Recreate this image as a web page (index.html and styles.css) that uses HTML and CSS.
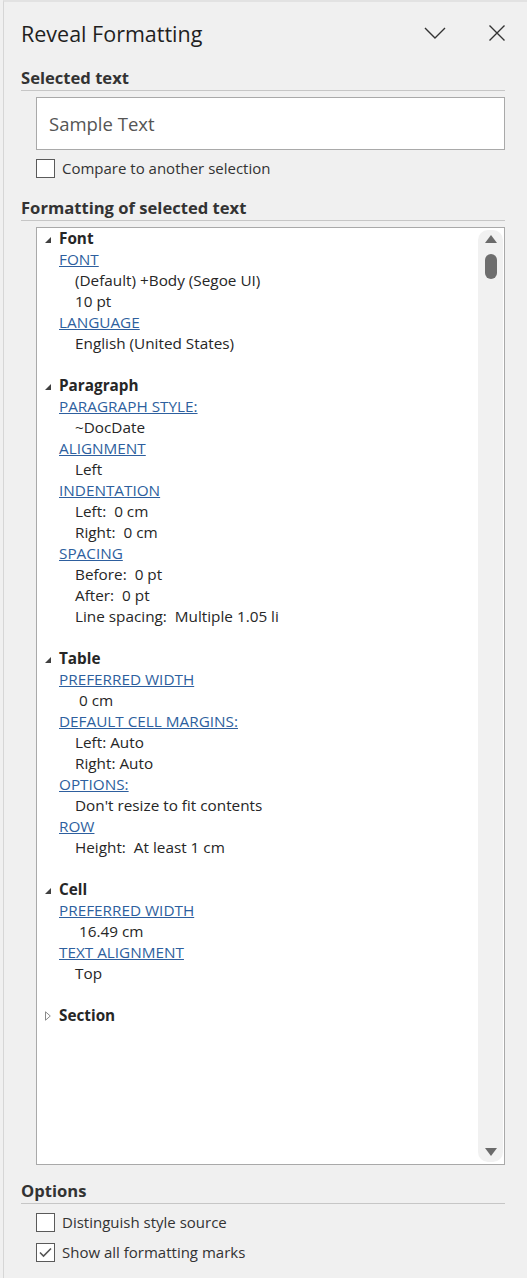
FILE: index.html
```html
<!DOCTYPE html>
<html lang="en">
<head>
    <meta charset="UTF-8">
    <title>Reveal Formatting</title>
    <link rel="stylesheet" href="styles.css">
</head>
<body>
    <div class="pane">
        <div class="pane-header">
            <h1>Reveal Formatting</h1>
            <div class="header-icons">
                <svg class="icon" width="22" height="14" viewBox="0 0 22 14"><path d="M1 2 L11 12 L21 2" fill="none" stroke="#333" stroke-width="1.4"/></svg>
                <svg class="icon" width="18" height="18" viewBox="0 0 18 18"><path d="M1.5 1.5 L16.5 16.5 M16.5 1.5 L1.5 16.5" fill="none" stroke="#333" stroke-width="1.4"/></svg>
            </div>
        </div>

        <h2 class="section-title">Selected text</h2>
        <div class="sample-box">Sample Text</div>
        <label class="check-row">
            <span class="checkbox"></span>
            Compare to another selection
        </label>

        <h2 class="section-title">Formatting of selected text</h2>
        <div class="list-box">
            <div class="tree">
                <div class="grp"><svg class="tri" width="6" height="6" viewBox="0 0 6 6"><path d="M6 0 L6 6 L0 6 Z" fill="#404040"/></svg>Font</div>
                <div class="key"><a href="#">FONT</a></div>
                <div class="val">(Default) +Body (Segoe UI)</div>
                <div class="val">10 pt</div>
                <div class="key"><a href="#">LANGUAGE</a></div>
                <div class="val">English (United States)</div>
                <div class="gap"></div>

                <div class="grp"><svg class="tri" width="6" height="6" viewBox="0 0 6 6"><path d="M6 0 L6 6 L0 6 Z" fill="#404040"/></svg>Paragraph</div>
                <div class="key"><a href="#">PARAGRAPH STYLE:</a></div>
                <div class="val">~DocDate</div>
                <div class="key"><a href="#">ALIGNMENT</a></div>
                <div class="val">Left</div>
                <div class="key"><a href="#">INDENTATION</a></div>
                <div class="val">Left:&nbsp; 0 cm</div>
                <div class="val">Right:&nbsp; 0 cm</div>
                <div class="key"><a href="#">SPACING</a></div>
                <div class="val">Before:&nbsp; 0 pt</div>
                <div class="val">After:&nbsp; 0 pt</div>
                <div class="val">Line spacing:&nbsp; Multiple 1.05 li</div>
                <div class="gap"></div>

                <div class="grp"><svg class="tri" width="6" height="6" viewBox="0 0 6 6"><path d="M6 0 L6 6 L0 6 Z" fill="#404040"/></svg>Table</div>
                <div class="key"><a href="#">PREFERRED WIDTH</a></div>
                <div class="val deep">0 cm</div>
                <div class="key"><a href="#">DEFAULT CELL MARGINS:</a></div>
                <div class="val">Left: Auto</div>
                <div class="val">Right: Auto</div>
                <div class="key"><a href="#">OPTIONS:</a></div>
                <div class="val">Don't resize to fit contents</div>
                <div class="key"><a href="#">ROW</a></div>
                <div class="val">Height:&nbsp; At least 1 cm</div>
                <div class="gap"></div>

                <div class="grp"><svg class="tri" width="6" height="6" viewBox="0 0 6 6"><path d="M6 0 L6 6 L0 6 Z" fill="#404040"/></svg>Cell</div>
                <div class="key"><a href="#">PREFERRED WIDTH</a></div>
                <div class="val deep">16.49 cm</div>
                <div class="key"><a href="#">TEXT ALIGNMENT</a></div>
                <div class="val">Top</div>
                <div class="gap"></div>

                <div class="grp"><svg class="tri closed" width="6" height="10" viewBox="0 0 6 10"><path d="M0.5 0.8 L5.3 5 L0.5 9.2 Z" fill="none" stroke="#8a8a8a" stroke-width="1"/></svg>Section</div>
            </div>
            <div class="scrollbar">
                <span class="arrow-up"></span>
                <span class="thumb"></span>
                <span class="track"></span>
                <span class="arrow-down"></span>
            </div>
        </div>

        <h2 class="section-title options">Options</h2>
        <label class="check-row">
            <span class="checkbox"></span>
            Distinguish style source
        </label>
        <label class="check-row">
            <span class="checkbox checked">
                <svg width="13" height="11" viewBox="0 0 13 11"><path d="M1 5.5 L4.5 9 L12 1.5" fill="none" stroke="#555" stroke-width="1.6"/></svg>
            </span>
            Show all formatting marks
        </label>
    </div>
</body>
</html>
```

FILE: styles.css
```css
body {
    margin: 0;
    background-color: #f0f0f0;
    font-family: "Segoe UI", "Open Sans", "Noto Sans", sans-serif;
    color: #262626;
}
.pane {
    margin-left: 3px;
    min-height: 1276px;
    border-left: 1px solid #d6d6d6;
    border-top: 2px solid #e2e2e2;
    padding: 0 22px 0 17px;
}
.pane-header {
    display: flex;
    align-items: center;
    justify-content: space-between;
    padding-top: 16px;
    height: 30px;
    margin-bottom: 19px;
}
h1 {
    margin: 0;
    font-size: 21.5px;
    font-weight: normal;
    color: #1f1f1f;
}
.header-icons {
    display: flex;
    align-items: center;
    gap: 42px;
    margin-right: -1px;
}
.icon {
    display: block;
}
.section-title {
    margin: 0;
    font-size: 16.6px;
    line-height: 22px;
    font-weight: bold;
    color: #333;
    padding-bottom: 1px;
    border-bottom: 1px solid #c6c6c6;
}
.sample-box {
    margin: 6px 0 0 15px;
    height: 51px;
    line-height: 51px;
    background: #fff;
    border: 1px solid #a9a9a9;
    padding-left: 12px;
    font-size: 18.5px;
    color: #555;
}
.check-row {
    display: flex;
    align-items: center;
    gap: 7px;
    margin-left: 15px;
    height: 30px;
    font-size: 15px;
    color: #333;
}
.sample-box + .check-row {
    margin-top: 3px;
}
.checkbox {
    width: 17px;
    height: 17px;
    border: 1px solid #5a5a5a;
    background: #fff;
    display: flex;
    align-items: center;
    justify-content: center;
}
.check-row + .section-title {
    margin-top: 14px;
}
.list-box {
    margin: 6px 0 0 15px;
    height: 936px;
    background: #fff;
    border: 1px solid #a9a9a9;
    display: flex;
}
.tree {
    flex: 1;
    font-size: 15.3px;
    line-height: 21px;
}
.tree > div {
    height: 21px;
    white-space: nowrap;
}
.grp {
    font-weight: bold;
    padding-left: 8px;
    display: flex;
    align-items: center;
}
.tri {
    margin: 2px 8px 0 0;
}
.tri.closed {
    margin: 0 8px 0 0;
}
.key {
    padding-left: 22px;
}
.key a {
    color: #2e5f9e;
    text-decoration: underline;
}
.val {
    padding-left: 38px;
    color: #262626;
}
.val.deep {
    padding-left: 42px;
}
.scrollbar {
    width: 25px;
    margin: 2px 1px 2px 0;
    background: #f1f1f1;
    border-radius: 10px;
    display: flex;
    flex-direction: column;
    align-items: center;
}
.arrow-up {
    margin-top: 5px;
    border-left: 6.5px solid transparent;
    border-right: 6.5px solid transparent;
    border-bottom: 8px solid #6b6b6b;
}
.thumb {
    margin-top: 11px;
    width: 12px;
    height: 25px;
    border-radius: 6px;
    background: #6e6e6e;
}
.track {
    flex: 1;
}
.arrow-down {
    margin-bottom: 6px;
    border-left: 6.5px solid transparent;
    border-right: 6.5px solid transparent;
    border-top: 8px solid #6b6b6b;
}
.options {
    margin-top: 15px;
}
.options + .check-row {
    margin-top: 3px;
}
```
